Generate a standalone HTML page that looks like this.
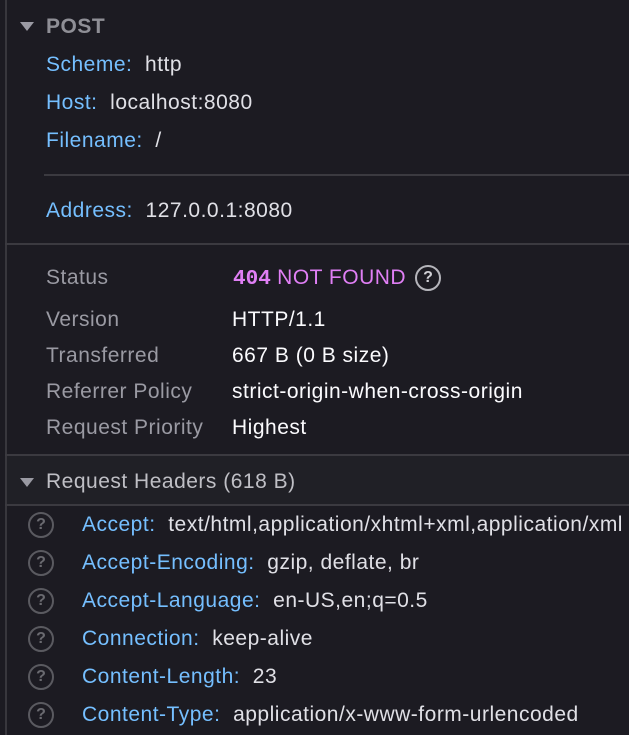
<!DOCTYPE html>
<html><head><style>
body{margin:0;width:629px;height:735px;overflow:hidden;background:#1c1b22;font-family:"Liberation Sans",sans-serif;font-size:21px;letter-spacing:0.5px;color:#e0e0e6;position:relative}
.a{position:absolute;white-space:nowrap;line-height:26px}
.vl{position:absolute;left:5px;top:0;width:2px;height:735px;background:#38373d}
.hl{position:absolute;height:2px;background:#3b3a40;right:0}
.b{color:#75bfff}
.g{color:#9a9aa3}
.w{color:#fbfbfe}
.tri{position:absolute;width:0;height:0;border-left:7px solid transparent;border-right:7px solid transparent;border-top:9px solid #9a9aa3}
.q{position:absolute;width:26px;height:26px;box-sizing:border-box;border:2px solid #5a5a60;border-radius:50%;color:#6a6a70;font-size:16px;letter-spacing:0;font-weight:bold;text-align:center;line-height:22px}
</style></head><body>
<div class="vl"></div>
<div class="tri" style="left:20px;top:22px"></div>
<div class="a" style="left:46px;top:14px;font-weight:bold;color:#8f8f96">POST</div>
<div class="a" style="left:46px;top:52px"><span class="b">Scheme:</span>&nbsp; http</div>
<div class="a" style="left:46px;top:90px"><span class="b">Host:</span>&nbsp; localhost:8080</div>
<div class="a" style="left:46px;top:128px"><span class="b">Filename:</span>&nbsp; /</div>
<div class="hl" style="left:44px;top:174px"></div>
<div class="a" style="left:46px;top:198px"><span class="b">Address:</span>&nbsp; 127.0.0.1:8080</div>
<div class="hl" style="left:5px;top:243px"></div>
<div class="a g" style="left:46px;top:265px">Status</div>
<div class="a" style="left:233px;top:265px;color:#e07ff5"><b style="font-family:'Liberation Mono',monospace;font-size:21px;letter-spacing:0">404</b> NOT FOUND</div>
<div class="q" style="left:415px;top:265px;border-color:#b5b5bb;color:#d0d0d5">?</div>
<div class="a g" style="left:46px;top:307px">Version</div><div class="a w" style="left:232px;top:307px">HTTP/1.1</div>
<div class="a g" style="left:46px;top:343px">Transferred</div><div class="a w" style="left:232px;top:343px">667 B (0 B size)</div>
<div class="a g" style="left:46px;top:379px">Referrer Policy</div><div class="a w" style="left:232px;top:379px">strict-origin-when-cross-origin</div>
<div class="a g" style="left:46px;top:415px">Request Priority</div><div class="a w" style="left:232px;top:415px">Highest</div>
<div class="hl" style="left:5px;top:454px"></div>
<div style="position:absolute;left:7px;top:456px;right:0;height:48px;background:#202026"></div>
<div class="tri" style="left:20px;top:478px"></div>
<div class="a" style="left:46px;top:469px;color:#bfbfc5">Request Headers (618 B)</div>
<div class="hl" style="left:5px;top:504px"></div>
<div class="q" style="left:28px;top:512px">?</div><div class="a" style="left:82px;top:512px"><span class="b">Accept:</span>&nbsp; text/html,application/xhtml+xml,application/xml</div>
<div class="q" style="left:28px;top:550px">?</div><div class="a" style="left:82px;top:550px"><span class="b">Accept-Encoding:</span>&nbsp; gzip, deflate, br</div>
<div class="q" style="left:28px;top:588px">?</div><div class="a" style="left:82px;top:588px"><span class="b">Accept-Language:</span>&nbsp; en-US,en;q=0.5</div>
<div class="q" style="left:28px;top:626px">?</div><div class="a" style="left:82px;top:626px"><span class="b">Connection:</span>&nbsp; keep-alive</div>
<div class="q" style="left:28px;top:664px">?</div><div class="a" style="left:82px;top:664px"><span class="b">Content-Length:</span>&nbsp; 23</div>
<div class="q" style="left:28px;top:702px">?</div><div class="a" style="left:82px;top:702px"><span class="b">Content-Type:</span>&nbsp; application/x-www-form-urlencoded</div>
</body></html>
